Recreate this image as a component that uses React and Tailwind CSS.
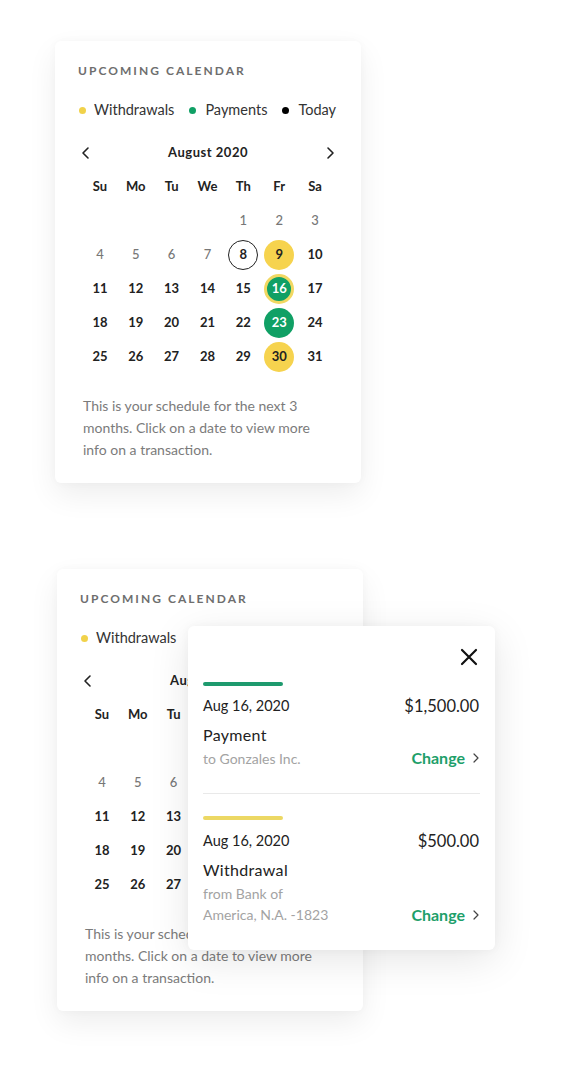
import React from "react";

const FONT = { fontFamily: "Lato, 'Open Sans', sans-serif" };

const weeks = [
  [null, null, null, null, 1, 2, 3],
  [4, 5, 6, 7, 8, 9, 10],
  [11, 12, 13, 14, 15, 16, 17],
  [18, 19, 20, 21, 22, 23, 24],
  [25, 26, 27, 28, 29, 30, 31],
];
const days = ["Su", "Mo", "Tu", "We", "Th", "Fr", "Sa"];

function Chevron({ dir }) {
  return (
    <svg width="12" height="14" viewBox="0 0 12 14" fill="none">
      {dir === "left" ? (
        <path d="M8 2 L3 7 L8 12" stroke="#222" strokeWidth="1.6" strokeLinecap="round" strokeLinejoin="round" />
      ) : (
        <path d="M4 2 L9 7 L4 12" stroke="#222" strokeWidth="1.6" strokeLinecap="round" strokeLinejoin="round" />
      )}
    </svg>
  );
}

function DayCell({ d }) {
  if (d === null) return <div className="h-[34px]" />;
  let inner;
  if (d === 8) {
    inner = (
      <span className="flex h-[30px] w-[30px] items-center justify-center rounded-full border border-[#222] font-bold text-[#222]">8</span>
    );
  } else if (d === 9 || d === 30) {
    inner = (
      <span className="flex h-[30px] w-[30px] items-center justify-center rounded-full bg-[#f6d34e] font-bold text-[#222]">{d}</span>
    );
  } else if (d === 16) {
    inner = (
      <span className="flex h-[30px] w-[30px] items-center justify-center rounded-full border-[3px] border-[#f1d862] bg-[#10a065] font-bold text-white">16</span>
    );
  } else if (d === 23) {
    inner = (
      <span className="flex h-[30px] w-[30px] items-center justify-center rounded-full bg-[#10a065] font-bold text-white">23</span>
    );
  } else if (d < 8) {
    inner = <span className="font-medium text-[#777]">{d}</span>;
  } else {
    inner = <span className="font-bold text-[#222]">{d}</span>;
  }
  return <div className="flex h-[34px] items-center justify-center text-[13px]">{inner}</div>;
}

function Card({ full, children }) {
  return (
    <div className="relative w-[306px] rounded-[6px] bg-white px-[23px] pb-[22px] pt-[22px] shadow-[0_12px_30px_rgba(0,0,0,0.07),0_0_8px_rgba(0,0,0,0.03)]">
      <div className="h-4 text-[12px] font-bold uppercase leading-4 tracking-[0.17em] text-[#6e6e6e]">Upcoming Calendar</div>
      <div className="mt-[21px] flex h-5 items-center text-[14.5px] leading-5 text-[#333]">
        <span className="ml-[1px] h-[7px] w-[7px] rounded-full bg-[#f1d24a]" />
        <span className="ml-[8px]">Withdrawals</span>
        {full && (
          <>
            <span className="ml-[15px] h-[7px] w-[7px] rounded-full bg-[#10a065]" />
            <span className="ml-[9px]">Payments</span>
            <span className="ml-[15px] h-[7px] w-[7px] rounded-full bg-black" />
            <span className="ml-[9px]">Today</span>
          </>
        )}
      </div>
      <div className="ml-[4px] w-[251px]">
        <div className="mt-[23px] flex h-5 items-center justify-between">
          <span className="-ml-[2px]"><Chevron dir="left" /></span>
          <span className="text-[13px] font-bold tracking-[0.04em] text-[#222]">August 2020</span>
          <span className="-mr-[3px]"><Chevron dir="right" /></span>
        </div>
        <div className="mt-[7px] grid grid-cols-7">
          {days.map((d) => (
            <div key={d} className="flex h-[34px] items-center justify-center text-[13px] font-bold text-[#222]">{d}</div>
          ))}
          {weeks.flat().map((d, i) => (
            <DayCell key={i} d={d} />
          ))}
        </div>
      </div>
      <p className="ml-[5px] mt-[21px] w-[240px] text-[14px] leading-[22px] text-[#7b7b7b]">
        This is your schedule for the next 3 months. Click on a date to view more info on a transaction.
      </p>
      {children}
    </div>
  );
}

function Change() {
  return (
    <span className="flex items-center text-[16px] font-bold text-[#1e9f6a]">
      Change
      <svg className="ml-[8px]" width="6" height="10" viewBox="0 0 6 10" fill="none">
        <path d="M1 1 L5 5 L1 9" stroke="#444" strokeWidth="1.2" strokeLinecap="round" strokeLinejoin="round" />
      </svg>
    </span>
  );
}

function Popup() {
  return (
    <div className="absolute left-[131px] top-[57px] w-[307px] rounded-[6px] bg-white pb-[25px] pl-[15px] pr-[16px] pt-[22px] shadow-[0_10px_40px_rgba(0,0,0,0.10),0_0_10px_rgba(0,0,0,0.04)]">
      <div className="flex justify-end pr-[1px]">
        <svg width="18" height="18" viewBox="0 0 18 18" fill="none">
          <path d="M2 2 L16 16 M16 2 L2 16" stroke="#111" strokeWidth="2.2" strokeLinecap="round" />
        </svg>
      </div>
      <div className="mt-[16px] h-1 w-[80px] rounded-full bg-[#1e9a6e]" />
      <div className="mt-[10px] flex h-5 items-center justify-between">
        <span className="text-[14.5px] text-[#222]">Aug 16, 2020</span>
        <span className="text-[16.5px] text-[#222]">$1,500.00</span>
      </div>
      <div className="mt-[8px] h-[22px] text-[16px] leading-[22px] tracking-[0.02em] text-[#222]">Payment</div>
      <div className="mt-[2px] flex h-5 items-center justify-between">
        <span className="text-[14px] text-[#a3a3a3]">to Gonzales Inc.</span>
        <Change />
      </div>
      <div className="mt-[25px] h-px w-[277px] bg-[#e9e9e9]" />
      <div className="mt-[22px] h-1 w-[80px] rounded-full bg-[#ecd864]" />
      <div className="mt-[11px] flex h-5 items-center justify-between">
        <span className="text-[14.5px] text-[#222]">Aug 16, 2020</span>
        <span className="text-[16.5px] text-[#222]">$500.00</span>
      </div>
      <div className="mt-[8px] h-[22px] text-[16px] leading-[22px] tracking-[0.02em] text-[#222]">Withdrawal</div>
      <div className="mt-[2px] flex items-end justify-between">
        <span className="text-[14px] leading-[21px] text-[#a3a3a3]">
          from Bank of
          <br />
          America, N.A. -1823
        </span>
        <span className="flex h-[21px] items-center"><Change /></span>
      </div>
    </div>
  );
}

export default function App() {
  return (
    <div className="min-h-[1091px] w-[577px] bg-white" style={FONT}>
      <div className="pl-[55px] pt-[41px]">
        <Card full />
      </div>
      <div className="pl-[57px] pt-[86px]">
        <Card full={false}>
          <Popup />
        </Card>
      </div>
    </div>
  );
}
